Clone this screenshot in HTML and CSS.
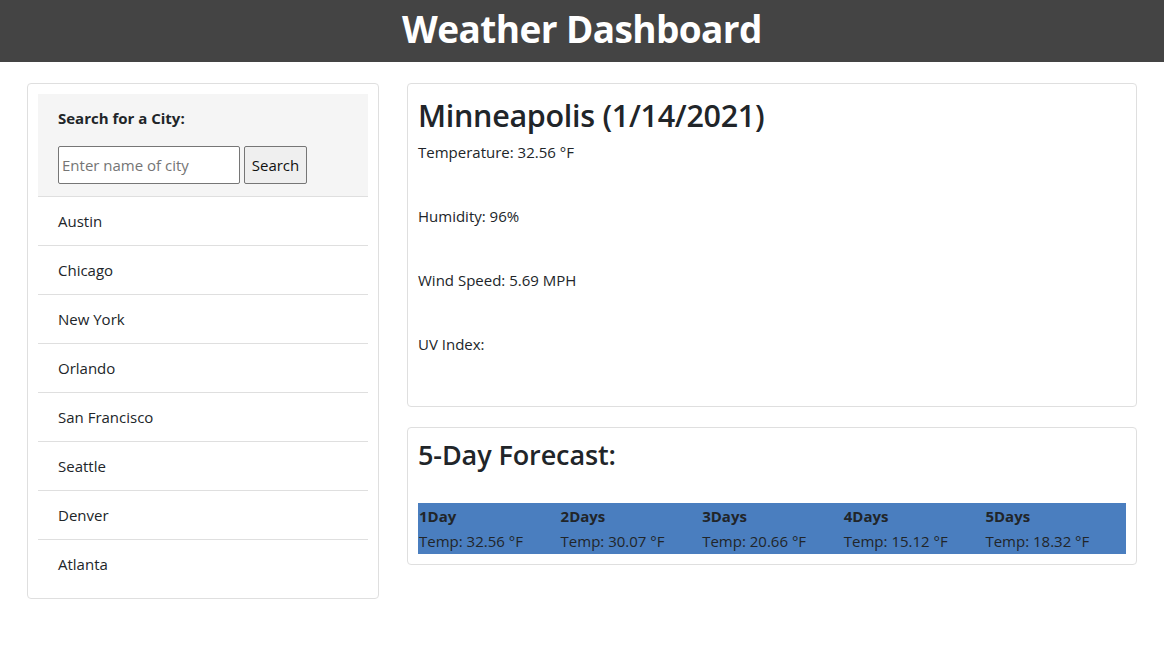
FILE: index.html
```html
<!DOCTYPE html>
<html lang="en">
<head>
<meta charset="utf-8">
<title>Weather Dashboard</title>
<link rel="stylesheet" href="styles.css">
</head>
<body>
<header class="topbar">
  <h1 class="title">Weather Dashboard</h1>
</header>
<main class="layout">
  <aside class="card side">
    <div class="search-panel">
      <label class="search-label" for="city">Search for a City:</label>
      <div class="search-row">
        <input id="city" class="search-input" type="text" placeholder="Enter name of city">
        <button class="search-btn" type="button">Search</button>
      </div>
    </div>
    <ul class="city-list">
      <li class="city">Austin</li>
      <li class="city">Chicago</li>
      <li class="city">New York</li>
      <li class="city">Orlando</li>
      <li class="city">San Francisco</li>
      <li class="city">Seattle</li>
      <li class="city">Denver</li>
      <li class="city">Atlanta</li>
    </ul>
  </aside>
  <section class="main-col">
    <div class="card current">
      <h2 class="city-title">Minneapolis (1/14/2021)</h2>
      <p class="stat">Temperature: 32.56 °F</p>
      <p class="stat">Humidity: 96%</p>
      <p class="stat">Wind Speed: 5.69 MPH</p>
      <p class="stat">UV Index:</p>
    </div>
    <div class="card forecast">
      <h3 class="forecast-title">5-Day Forecast:</h3>
      <div class="forecast-strip">
        <div class="day"><div class="day-name">1Day</div><div class="day-temp">Temp: 32.56 °F</div></div>
        <div class="day"><div class="day-name">2Days</div><div class="day-temp">Temp: 30.07 °F</div></div>
        <div class="day"><div class="day-name">3Days</div><div class="day-temp">Temp: 20.66 °F</div></div>
        <div class="day"><div class="day-name">4Days</div><div class="day-temp">Temp: 15.12 °F</div></div>
        <div class="day"><div class="day-name">5Days</div><div class="day-temp">Temp: 18.32 °F</div></div>
      </div>
    </div>
  </section>
</main>
</body>
</html>
```
FILE: styles.css
```css
* { box-sizing: border-box; }
html, body { margin: 0; padding: 0; }
body {
  font-family: "Open Sans", "Noto Sans", sans-serif;
  font-size: 16px;
  line-height: 24px;
  color: #212529;
  background: #fff;
}
.topbar {
  background: #444;
  height: 62px;
  display: flex;
  align-items: center;
  justify-content: center;
  padding-bottom: 6px;
}
.title {
  margin: 0;
  color: #fff;
  font-size: 37px;
  font-weight: 700;
  line-height: 1;
  letter-spacing: -0.6px;
}
.layout {
  display: flex;
  align-items: flex-start;
  gap: 28px;
  padding: 21px 27px 0;
}
.card {
  border: 1px solid #dfdfdf;
  border-radius: 4px;
  padding: 10px;
  background: #fff;
}
.side { width: 352px; flex: none; }
.search-panel {
  background: #f5f5f5;
  padding: 12px 20px;
  border-bottom: 1px solid #dfdfdf;
}
.search-label {
  display: block;
  font-weight: 700;
  font-size: 15px;
  margin-bottom: 16px;
}
.search-row { display: flex; gap: 4px; }
.search-input {
  width: 182px;
  height: 38px;
  border: 1px solid #767676;
  border-radius: 2px;
  padding: 0 3px;
  font: inherit;
  font-size: 15px;
  color: #212529;
  background: #fff;
}
.search-input::placeholder { color: #757575; }
.search-btn {
  height: 38px;
  width: 63px;
  padding: 0;
  border: 1px solid #767676;
  border-radius: 2px;
  background: #efefef;
  font: inherit;
  font-size: 15px;
  color: #111;
}
.city-list { list-style: none; margin: 0; padding: 0; }
.city {
  padding: 12px 20px;
  border-bottom: 1px solid #dfdfdf;
  font-size: 15px;
}
.city:last-child { border-bottom: none; }
.main-col {
  flex: 1;
  display: flex;
  flex-direction: column;
  gap: 20px;
}
.city-title {
  margin: 2px 0 6px;
  font-size: 30.5px;
  font-weight: 600;
  line-height: 38px;
  letter-spacing: -0.3px;
}
.stat {
  margin: 0 0 40px;
  font-size: 15px;
}
.forecast-title {
  margin: 0 0 31px;
  font-size: 27px;
  font-weight: 600;
  line-height: 34px;
  letter-spacing: -0.1px;
}
.forecast-strip {
  background: #4a7ebf;
  display: grid;
  grid-template-columns: repeat(5, 1fr);
  height: 51px;
}
.day { padding-left: 1px; }
.day-name { font-weight: 700; font-size: 15px; line-height: 26px; }
.day-temp { font-size: 15px; line-height: 25px; }
```
